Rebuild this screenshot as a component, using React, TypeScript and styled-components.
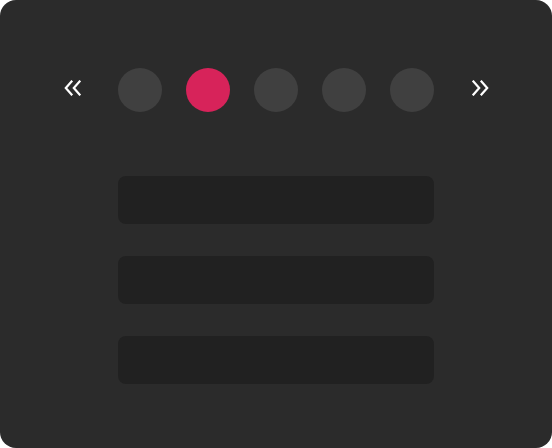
import * as React from 'react';
import styled, { createGlobalStyle } from 'styled-components';

const GlobalStyle = createGlobalStyle`
  html, body {
    margin: 0;
    padding: 0;
    background: #ffffff;
    font-family: "DejaVu Sans", sans-serif;
  }
`;

const Card = styled.div`
  width: 552px;
  height: 448px;
  box-sizing: border-box;
  background: #2b2b2b;
  border-radius: 16px;
  padding: 68px 48px 0;
  display: flex;
  flex-direction: column;
  align-items: center;
`;

const Pager = styled.div`
  display: grid;
  grid-template-columns: 48px 316px 48px;
  column-gap: 22px;
  align-items: center;
  height: 44px;
`;

const Arrow = styled.button`
  width: 48px;
  height: 44px;
  box-sizing: border-box;
  padding: 0 0 5px;
  border: 0;
  background: transparent;
  color: #ffffff;
  display: flex;
  align-items: center;
  justify-content: center;
  cursor: pointer;
`;

const Dots = styled.div`
  display: flex;
  gap: 24px;
`;

const Dot = styled.span<{ $active?: boolean }>`
  width: 44px;
  height: 44px;
  border-radius: 50%;
  background: ${(p) => (p.$active ? '#d7235a' : '#404040')};
`;

const Slots = styled.div`
  margin-top: 64px;
  width: 316px;
  display: flex;
  flex-direction: column;
  gap: 32px;
`;

const Slot = styled.div`
  height: 48px;
  border-radius: 8px;
  background: #212121;
`;

// double chevron, flipped for "next"
const DoubleChevron = ({ flip }: { flip?: boolean }) => (
  <svg
    width="17"
    height="16"
    viewBox="0 0 17 16"
    fill="none"
    stroke="currentColor"
    strokeWidth="2.2"
    strokeLinecap="square"
    style={flip ? { transform: 'scaleX(-1)' } : undefined}
  >
    <polyline points="7.5,1.5 1.8,8 7.5,14.5" />
    <polyline points="15.5,1.5 9.8,8 15.5,14.5" />
  </svg>
);

export default function App() {
  const pages = [0, 1, 2, 3, 4];
  const current = 1;

  return (
    <>
      <GlobalStyle />
      <Card>
        <Pager>
          <Arrow aria-label="previous">
            <DoubleChevron />
          </Arrow>
          <Dots>
            {pages.map((i) => (
              <Dot key={i} $active={i === current} />
            ))}
          </Dots>
          <Arrow aria-label="next">
            <DoubleChevron flip />
          </Arrow>
        </Pager>
        <Slots>
          <Slot />
          <Slot />
          <Slot />
        </Slots>
      </Card>
    </>
  );
}
